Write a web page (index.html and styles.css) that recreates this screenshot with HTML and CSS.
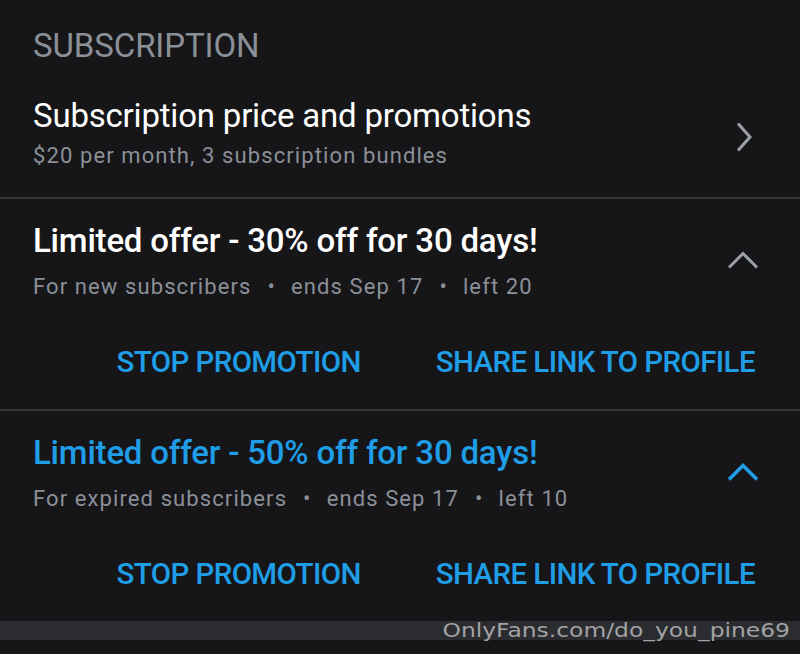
FILE: index.html
```html
<!DOCTYPE html>
<html>
<head>
<meta charset="utf-8">
<link rel="stylesheet" href="styles.css">
</head>
<body>
<div class="screen">
  <div class="section-label">SUBSCRIPTION</div>
  <div class="row row-first">
    <div class="row-text">
      <div class="title">Subscription price and promotions</div>
      <div class="sub sub-first">$20 per month, 3 subscription bundles</div>
    </div>
    <svg class="chev chev-right" width="18" height="32" viewBox="0 0 18 32"><path d="M3 2.5 L15 16 L3 29.5" fill="none" stroke="#9ca1a9" stroke-width="3"/></svg>
  </div>
  <div class="divider"></div>
  <div class="promo">
    <div class="row row-promo">
      <div class="row-text">
        <div class="title promo-title">Limited offer - 30% off for 30 days!</div>
        <div class="sub meta">For new subscribers<span class="dot">•</span>ends Sep 17<span class="dot">•</span>left 20</div>
      </div>
      <svg class="chev chev-up" width="32" height="20" viewBox="0 0 32 20"><path d="M2 17.5 L16 3.5 L30 17.5" fill="none" stroke="#9ca1a9" stroke-width="3"/></svg>
    </div>
    <div class="actions">
      <span class="btn">STOP PROMOTION</span>
      <span class="btn">SHARE LINK TO PROFILE</span>
    </div>
  </div>
  <div class="divider"></div>
  <div class="promo">
    <div class="row row-promo">
      <div class="row-text">
        <div class="title promo-title blue">Limited offer - 50% off for 30 days!</div>
        <div class="sub meta">For expired subscribers<span class="dot">•</span>ends Sep 17<span class="dot">•</span>left 10</div>
      </div>
      <svg class="chev chev-up" width="32" height="20" viewBox="0 0 32 20"><path d="M2 17.5 L16 3.5 L30 17.5" fill="none" stroke="#1f9de6" stroke-width="3.6"/></svg>
    </div>
    <div class="actions">
      <span class="btn">STOP PROMOTION</span>
      <span class="btn">SHARE LINK TO PROFILE</span>
    </div>
  </div>
  <div class="band"></div>
  <div class="watermark">OnlyFans.com/do_you_pine69</div>
</div>
</body>
</html>
```
FILE: styles.css
```css
html, body {
  margin: 0;
  padding: 0;
  background: #161619;
}
.screen {
  position: relative;
  width: 800px;
  height: 654px;
  overflow: hidden;
  background: #161619;
  font-family: Roboto, "Liberation Sans", sans-serif;
}
.section-label {
  padding: 26px 0 0 33px;
  height: 40px;
  font-size: 33px;
  line-height: 40px;
  color: #8b9098;
  letter-spacing: -0.1px;
}
.row {
  display: flex;
  justify-content: space-between;
  align-items: flex-start;
  padding: 0 0 0 33px;
}
.row-first {
  padding-top: 29.7px;
  padding-bottom: 22.5px;
}
.row-promo {
  padding-top: 22.5px;
}
.title {
  font-size: 33px;
  line-height: 40px;
  color: #ffffff;
  letter-spacing: -0.2px;
  white-space: nowrap;
}
.promo-title {
  font-weight: 500;
}
.blue { color: #1f9de6; }
.sub {
  font-size: 22px;
  line-height: 36px;
  color: #8b9098;
  letter-spacing: 1.1px;
  white-space: nowrap;
}
.sub-first {
  margin-top: 2.8px;
}
.meta {
  margin-top: 7.5px;
}
.dot {
  margin: 0 15px 0 16px;
}
.chev-right {
  margin: 25.3px 47px 0 0;
}
.chev-up {
  margin: 29px 41px 0 0;
}
.divider {
  height: 2px;
  background: #36373b;
}
.actions {
  display: flex;
  justify-content: flex-end;
  gap: 75px;
  padding: 37.2px 45px 26.8px 0;
}
.btn {
  font-size: 29.5px;
  font-weight: 500;
  color: #1f9de6;
  line-height: 40px;
  letter-spacing: -0.6px;
  white-space: nowrap;
}
.band {
  height: 19px;
  background: #2b2c2f;
}
.watermark {
  position: absolute;
  right: 10px;
  top: 618.4px;
  font-family: "DejaVu Sans", sans-serif;
  font-size: 20px;
  line-height: 24px;
  color: #a2a2a5;
  white-space: nowrap;
  transform: scaleX(1.17);
  transform-origin: right center;
}
```
